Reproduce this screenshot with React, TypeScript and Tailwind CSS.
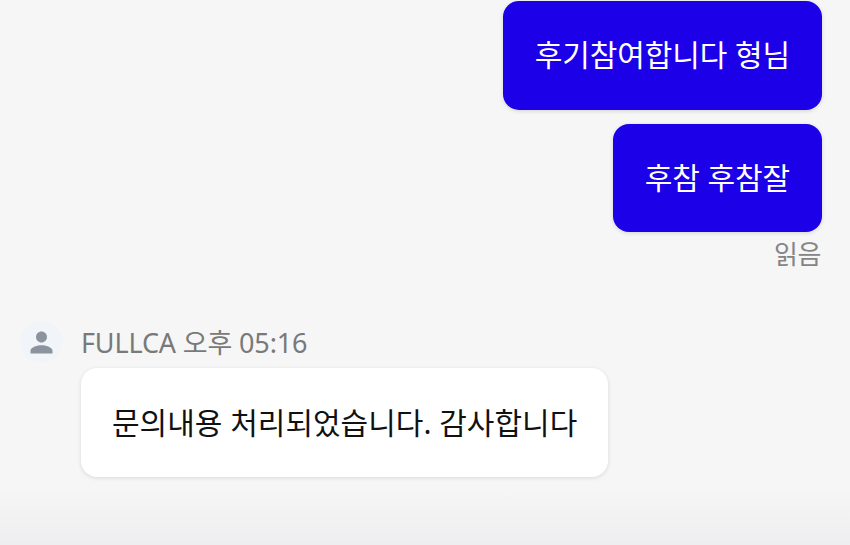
import React from 'react';

const FONT = "font-['Noto_Sans','Noto_Sans_CJK_KR',sans-serif]";

const MyBubble = ({ text }: { text: string }) => (
  <div className="flex h-[108.5px] items-center rounded-[16px] bg-[#1b00e8] pl-[32px] pr-[32px] text-[30px] leading-none tracking-[-0.1px] text-white shadow-[0_1px_4px_rgba(0,0,0,0.14)]">
    {text}
  </div>
);

const App: React.FC = () => {
  return (
    <div className={`flex h-[545px] w-[850px] flex-col overflow-hidden bg-[#f6f6f6] ${FONT}`}>
      <div className="flex flex-col items-end pr-[28px] pt-[1px]">
        <div className="flex flex-col items-end gap-[14px]">
          <MyBubble text="후기참여합니다 형님" />
          <MyBubble text="후참 후참잘" />
        </div>
        <div className="mt-[3px] pr-[1px] text-[26px] leading-[38px] tracking-[-0.4px] text-[#858585]">읽음</div>
      </div>

      {/* Received message */}
      <div className="mt-[48px] flex items-start pl-[20px]">
        <div className="flex h-[42px] w-[42px] shrink-0 items-center justify-center rounded-full bg-[#f1f4f8]">
          <svg viewBox="0 0 24 24" className="h-[33px] w-[33px] fill-[#8a939e]">
            <path d="M12 12c2.2 0 4-1.8 4-4s-1.8-4-4-4-4 1.8-4 4 1.8 4 4 4zm0 2c-2.7 0-8 1.3-8 4v2h16v-2c0-2.7-5.3-4-8-4z" />
          </svg>
        </div>
        <div className="ml-[19px] flex flex-col">
          <div className="text-[27px] leading-[43px] tracking-[-0.15px] text-[#797979]">FULLCA 오후 05:16</div>
          <div className="mt-[4px] flex h-[109px] w-[527px] items-center rounded-[16px] bg-white pl-[31px] text-[30px] leading-none text-[#111111] shadow-[0_1px_4px_rgba(0,0,0,0.12)]">
            문의내용 처리되었습니다. 감사합니다
          </div>
        </div>
      </div>

      <div className="mt-auto h-[58px] bg-gradient-to-b from-[#f6f6f6] to-[#eeeef0]" />
    </div>
  );
};

export default App;
